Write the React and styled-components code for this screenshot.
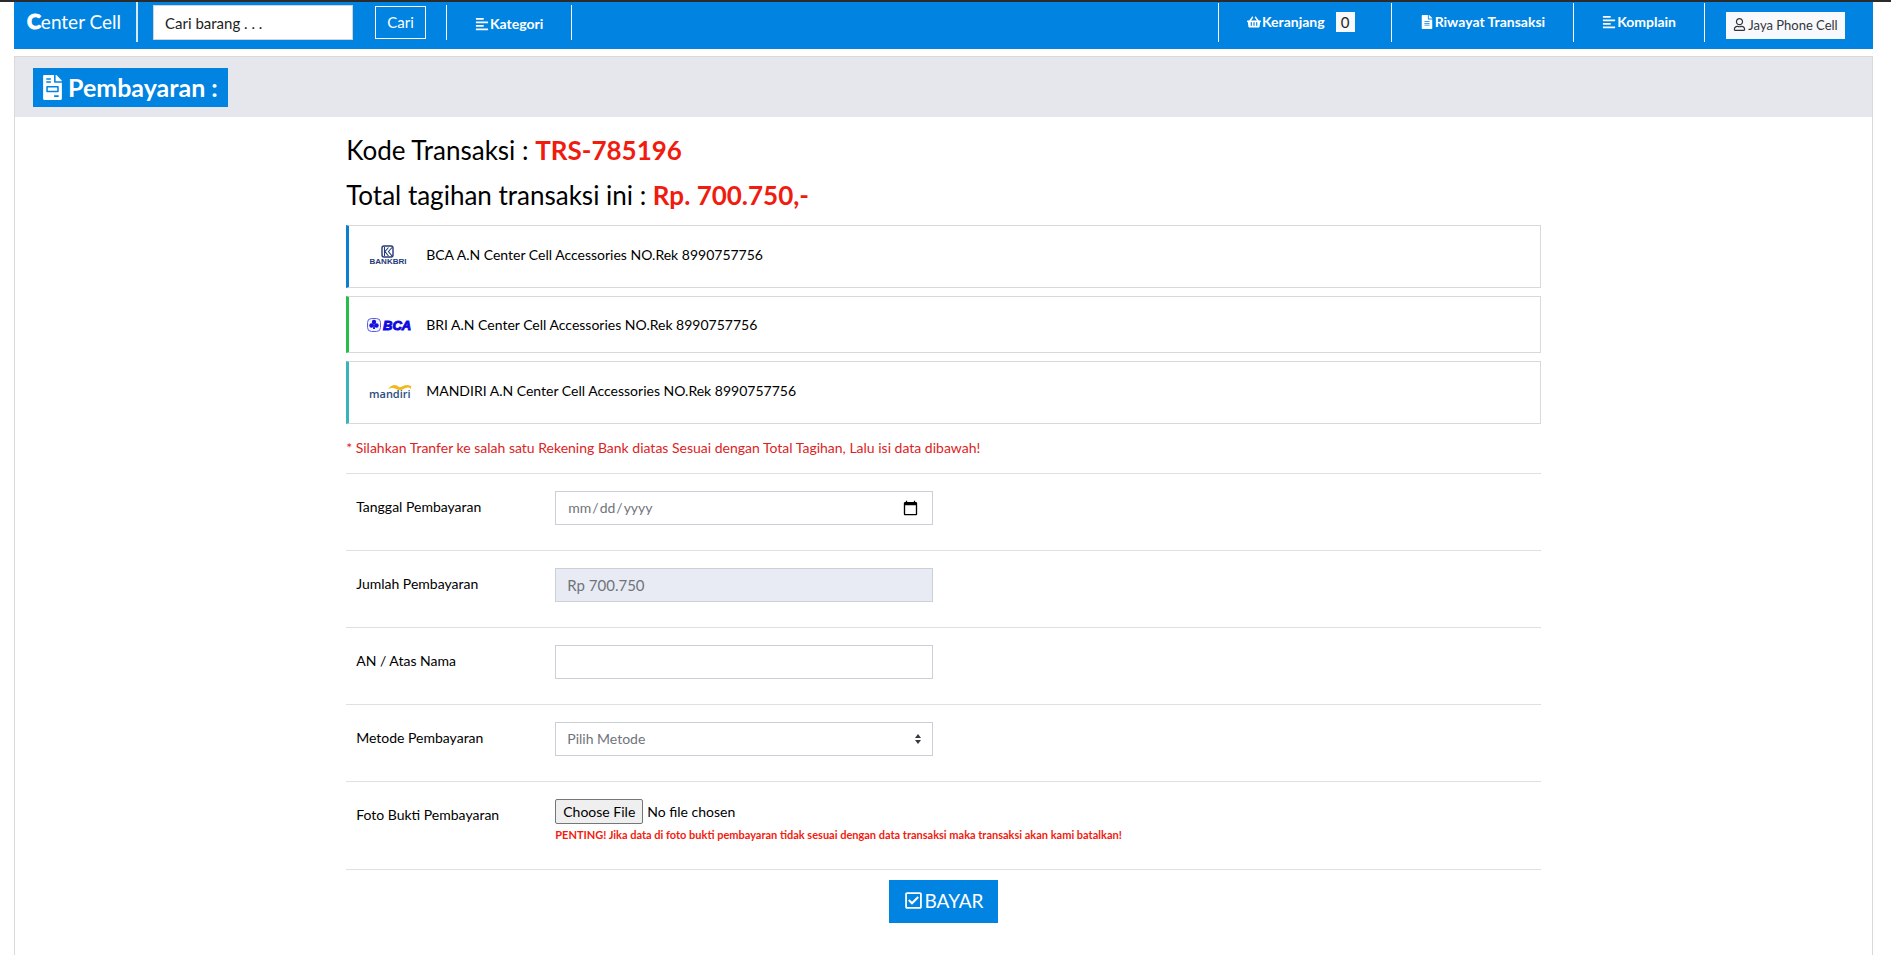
import React from "react";
import styled, { createGlobalStyle, css } from "styled-components";
import {
  FaAlignLeft,
  FaShoppingBasket,
  FaFileInvoice,
  FaFileAlt,
  FaRegUser,
  FaRegCheckSquare,
} from "react-icons/fa";

const blue = "#0083e1";
const line = "#d8d9db";
const red = "#f01c10";

const Global = createGlobalStyle`
  *, *::before, *::after { box-sizing: border-box; }
  html, body, #root { height: 100%; }
  body {
    margin: 0;
    background: #fff;
    color: #000;
    font-family: Lato, "Noto Sans", sans-serif;
    font-size: 14px;
    line-height: 20px;
  }
  button, input, select { font: inherit; border-radius: 0; }
  a { color: inherit; text-decoration: none; }
`;

const Page = styled.div`
  display: flex;
  flex-direction: column;
  min-height: 100%;
  border-top: 2px solid #2b2b2b;
  padding: 0 18px 0 14px;
`;

const Nav = styled.header`
  display: flex;
  align-items: flex-start;
  flex: none;
  height: 47px;
  background: ${blue};
  color: #fff;
`;

const Brand = styled.a`
  flex: none;
  height: 40px;
  padding: 0 15px 0 13px;
  border-right: 2px solid #d5e9f8;
  font-size: 19px;
  line-height: 38px;
  b {
    font-size: 21px;
    font-weight: 900;
    -webkit-text-stroke: 1px #fff;
  }
`;

const Search = styled.form`
  display: flex;
  align-items: center;
  gap: 22px;
  height: 41px;
  padding: 0 20px 0 15px;
`;

const SearchInput = styled.input`
  width: 200px;
  height: 35px;
  padding: 0 11px;
  border: 1px solid #ced4da;
  background: #fff;
  font-size: 15px;
  &::placeholder { color: #222; opacity: 1; }
`;

const SearchButton = styled.button`
  width: 51px;
  height: 33px;
  padding: 0 0 2px;
  border: 1px solid #fff;
  background: transparent;
  color: #fff;
  font-size: 15px;
`;

const NavLink = styled.a`
  display: flex;
  align-items: center;
  gap: 1px;
  height: 39px;
  margin-top: 1px;
  padding: 0 28px 2px;
  border: 0 solid #fff;
  border-left-width: 1px;
  font-weight: 700;
  ${(p) => p.$side && css`
    height: 35px;
    margin-top: 3px;
    padding-bottom: 0;
    padding-top: 2px;
    border-right-width: 1px;
  `}
`;

const NavEnd = styled.nav`
  display: flex;
  margin-left: auto;
`;

const Count = styled.span`
  width: 19px;
  height: 20px;
  margin: 0 8px 0 10px;
  background: #f8f9fa;
  color: #212529;
  font-size: 15px;
  font-weight: 400;
  text-align: center;
`;

const Account = styled.div`
  display: flex;
  height: 39px;
  margin-top: 1px;
  padding: 9px 28px 0 21px;
  border-left: 1px solid #fff;
`;

const AccountButton = styled.button`
  display: flex;
  align-items: center;
  justify-content: center;
  gap: 2px;
  width: 119px;
  height: 27px;
  padding: 0 0 2px;
  border: 0;
  background: #f8f9fc;
  color: #33363b;
  font-size: 13px;
`;

const Panel = styled.main`
  flex: 1;
  margin-top: 7px;
  border: 1px solid ${line};
  border-bottom: 0;
`;

const PanelHead = styled.div`
  display: flex;
  height: 60px;
  padding: 11px 18px;
  background: #e5e7ec;
`;

const Title = styled.h1`
  display: flex;
  align-items: center;
  gap: 3px;
  height: 39px;
  margin: 0;
  padding: 0 10px 0 7px;
  background: ${blue};
  color: #fff;
  font-size: 25px;
  line-height: 39px;
  font-weight: 700;
`;

const Grid = styled.div`
  display: grid;
  grid-template-columns: 2fr 8fr 2fr;
  padding: 0 10px;
`;

const Content = styled.div`
  grid-column: 2;
  padding: 11px 15px 0;
`;

const Summary = styled.p`
  margin: 0;
  font-size: 26px;
  line-height: 45px;
  strong { color: ${red}; }
`;

const Banks = styled.ul`
  display: flex;
  flex-direction: column;
  gap: 8px;
  margin: 7px 0 0;
  padding: 0;
  list-style: none;
`;

const Bank = styled.li`
  display: flex;
  align-items: center;
  gap: 15px;
  height: ${(p) => (p.$short ? "57px" : "63px")};
  padding: ${(p) => (p.$short ? "0 16px" : "0 16px 3px")};
  border: 1px solid ${line};
  border-left: 3px solid ${(p) => p.$color};
  svg { flex: none; display: block; }
`;

const Note = styled.p`
  margin: 14px 0 15px;
  color: #dc2323;
`;

const Row = styled.div`
  display: grid;
  grid-template-columns: minmax(0, 2fr) minmax(0, 4fr) minmax(0, 6fr);
  height: ${(p) => (p.$tall ? "88px" : "77px")};
  padding-top: 17px;
  border-top: 1px solid #dfe0e2;
  label { padding: 6px 10px; white-space: nowrap; }
`;

const Cell = styled.div`
  padding: 0 10px;
`;

const control = css`
  display: block;
  width: 100%;
  height: 34px;
  padding: 0 11px;
  border: 1px solid #cdcfd8;
  background: #fff;
  color: #6f747b;
`;

const Input = styled.input`
  ${control}
  &[type="text"] { font-size: 15px; }
  &:disabled { background: #e8ebf4; }
  &::-webkit-calendar-picker-indicator {
    width: 17px;
    height: 17px;
  }
`;

const SelectWrap = styled.div`
  display: grid;
  align-items: center;
  > * { grid-area: 1 / 1; }
  svg { justify-self: end; margin-right: 11px; pointer-events: none; }
`;

const Select = styled.select`
  ${control}
  appearance: none;
`;

const FileInput = styled.input`
  display: block;
  width: 100%;
  height: 25px;
  &::file-selector-button {
    height: 25px;
    margin: 0 4px 0 0;
    padding: 0 7px;
    border: 1px solid #767676;
    border-radius: 2px;
    background: #efefef;
    color: #000;
    font: inherit;
  }
`;

const Warning = styled.p`
  margin: 1px 0 0;
  color: ${red};
  font-size: 11px;
  font-weight: 700;
  white-space: nowrap;
`;

const Actions = styled.div`
  display: flex;
  justify-content: center;
  padding-top: 10px;
  border-top: 1px solid #dfe0e2;
`;

const PayButton = styled.button`
  display: flex;
  align-items: center;
  justify-content: center;
  gap: 2px;
  width: 109px;
  height: 43px;
  padding: 0 0 2px;
  border: 0;
  background: ${blue};
  color: #fff;
  font-size: 19px;
`;

const BriLogo = () => (
  <svg width="46" height="24" viewBox="0 0 46 24" role="img" aria-label="Bank BRI">
    <rect x="17" y="3" width="11" height="11" rx="2" fill="none" stroke="#263b78" strokeWidth="1.4" />
    <path d="M19.500 4v9M23.500 4.500l-3.500 4 3.500 4.500M27 4.500l-3.500 4 3.500 4.500" fill="none" stroke="#263b78" strokeWidth="1.100" />
    <text x="23" y="21" textAnchor="middle" fontFamily="Liberation Sans, sans-serif" fontSize="8" fontWeight="700" fill="#263b78">BANKBRI</text>
  </svg>
);

const BcaLogo = () => (
  <svg width="46" height="24" viewBox="0 0 46 24" role="img" aria-label="BCA">
    <rect x="2.500" y="5.500" width="13" height="13" rx="4" fill="#f2f3ff" stroke="#5b62dd" />
    <g fill="#1410dd">
      <circle cx="9" cy="9" r="2.200" />
      <circle cx="6.500" cy="12.500" r="2.200" />
      <circle cx="11.500" cy="12.500" r="2.200" />
      <path d="M8.500 11h1l.5 5H8z" />
    </g>
    <text x="18" y="17" fontFamily="Liberation Sans, sans-serif" fontSize="13" fontWeight="700" fontStyle="italic" fill="#0d09e0" stroke="#0d09e0" strokeWidth="1">BCA</text>
  </svg>
);

const MandiriLogo = () => (
  <svg width="46" height="24" viewBox="0 0 46 24" role="img" aria-label="Mandiri">
    <text x="4" y="19" fontFamily="Open Sans, sans-serif" fontSize="11" fontWeight="600" fill="#2c4d7d">mandiri</text>
    <path d="M23 10c4-5 8-5 11-2 3 1 6-4 12-1v3c-4-4-7 1-11 1-4 0-6-4-12-1z" fill="#efb920" />
  </svg>
);

const banks = [
  { name: "BCA", color: "#0b7fcf", logo: <BriLogo /> },
  { name: "BRI", color: "#28bd4b", logo: <BcaLogo />, short: true },
  { name: "MANDIRI", color: "#3cb2bb", logo: <MandiriLogo /> },
];

export default function App() {
  return (
    <>
      <Global />
      <Page>
        <Nav>
          <Brand href="#"><b>C</b>enter Cell</Brand>
          <Search>
            <SearchInput type="text" aria-label="Cari barang" placeholder="Cari barang . . ." />
            <SearchButton type="button">Cari</SearchButton>
          </Search>
          <NavLink href="#" $side><FaAlignLeft />Kategori</NavLink>
          <NavEnd>
            <NavLink href="#"><FaShoppingBasket />Keranjang<Count>0</Count></NavLink>
            <NavLink href="#"><FaFileAlt />Riwayat Transaksi</NavLink>
            <NavLink href="#"><FaAlignLeft />Komplain</NavLink>
            <Account>
              <AccountButton type="button"><FaRegUser />Jaya Phone Cell</AccountButton>
            </Account>
          </NavEnd>
        </Nav>
        <Panel>
          <PanelHead>
            <Title><FaFileInvoice />Pembayaran :</Title>
          </PanelHead>
          <Grid>
            <Content>
              <Summary>Kode Transaksi : <strong>TRS-785196</strong></Summary>
              <Summary>Total tagihan transaksi ini : <strong>Rp. 700.750,-</strong></Summary>
              <Banks>
                {banks.map((b) => (
                  <Bank key={b.name} $color={b.color} $short={b.short}>
                    {b.logo}
                    <span>{b.name} A.N Center Cell Accessories NO.Rek 8990757756</span>
                  </Bank>
                ))}
              </Banks>
              <Note>* Silahkan Tranfer ke salah satu Rekening Bank diatas Sesuai dengan Total Tagihan, Lalu isi data dibawah!</Note>
              <form>
                <Row>
                  <label htmlFor="tanggal">Tanggal Pembayaran</label>
                  <Cell><Input id="tanggal" type="date" /></Cell>
                </Row>
                <Row>
                  <label htmlFor="jumlah">Jumlah Pembayaran</label>
                  <Cell><Input id="jumlah" type="text" defaultValue="Rp 700.750" disabled /></Cell>
                </Row>
                <Row>
                  <label htmlFor="nama">AN / Atas Nama</label>
                  <Cell><Input id="nama" type="text" /></Cell>
                </Row>
                <Row>
                  <label htmlFor="metode">Metode Pembayaran</label>
                  <Cell>
                    <SelectWrap>
                      <Select id="metode"><option>Pilih Metode</option></Select>
                      <svg width="8" height="10" viewBox="0 0 8 10" fill="#343a40"><path d="M4 0l3 4H1zM4 10L1 6h6z" /></svg>
                    </SelectWrap>
                  </Cell>
                </Row>
                <Row $tall>
                  <label htmlFor="foto">Foto Bukti Pembayaran</label>
                  <Cell>
                    <FileInput id="foto" type="file" />
                    <Warning>PENTING! Jika data di foto bukti pembayaran tidak sesuai dengan data transaksi maka transaksi akan kami batalkan!</Warning>
                  </Cell>
                </Row>
                <Actions>
                  <PayButton type="button"><FaRegCheckSquare />BAYAR</PayButton>
                </Actions>
              </form>
            </Content>
          </Grid>
        </Panel>
      </Page>
    </>
  );
}
